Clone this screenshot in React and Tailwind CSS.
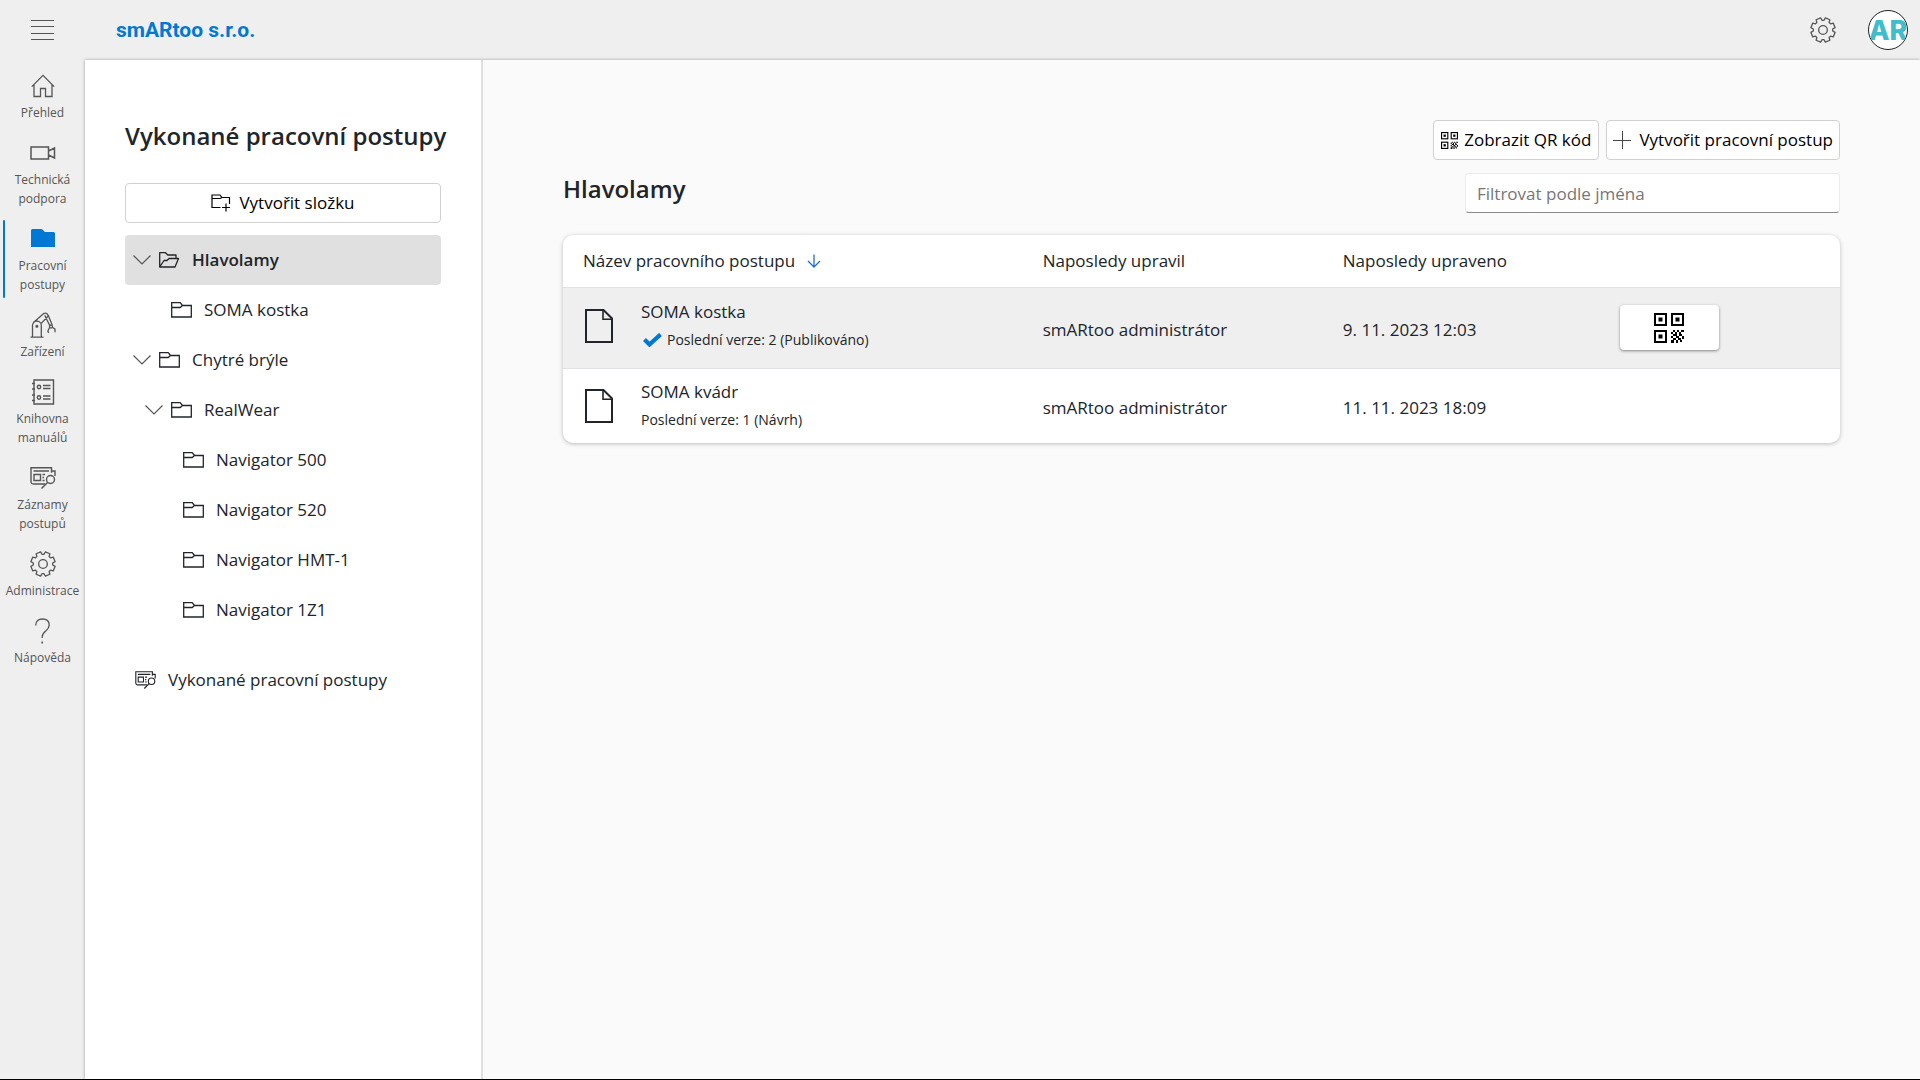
const gearPath = (() => {
  const points = [];
  for (let i = 0; i < 8; i += 1) {
    const notch = i * 45;
    [
      [notch - 11, 11.4],
      [notch - 6, 9],
      [notch + 6, 9],
      [notch + 11, 11.4],
    ].forEach(([deg, r]) => {
      const rad = (deg * Math.PI) / 180;
      points.push(`${(12 + r * Math.cos(rad)).toFixed(2)} ${(12 + r * Math.sin(rad)).toFixed(2)}`);
    });
  }
  return `M${points.join("L")}Z`;
})();

function MenuIcon() {
  return (
    <svg className="h-6 w-6" viewBox="0 0 24 24" fill="none" stroke="currentColor" aria-hidden="true">
      <path d="M0 2.5h23M0 8.5h23M0 15.5h23M0 21.5h23" />
    </svg>
  );
}

function HomeIcon() {
  return (
    <svg className="h-6 w-6" viewBox="0 0 24 24" fill="none" stroke="currentColor" strokeWidth="1.3" aria-hidden="true">
      <path d="M.8 12.6 12 1.4l11.2 11.2M3 10.6v11.9h6.5v-8h5v8H21V10.6" />
    </svg>
  );
}

function VideoIcon() {
  return (
    <svg className="h-6 w-[26px]" viewBox="0 0 26 24" fill="none" stroke="currentColor" strokeWidth="1.5" aria-hidden="true">
      <path d="M1 6h17.5v12H1ZM18.5 10l6-3v10l-6-3" />
    </svg>
  );
}

function FolderSolidIcon() {
  return (
    <svg className="h-6 w-6" viewBox="0 0 24 24" fill="currentColor" aria-hidden="true">
      <path d="M0 3.5q0-1.500 1.500-1.500h8.600q.8 0 1.400.6L13.900 5H22.500Q24 5 24 6.500V20H0Z" />
    </svg>
  );
}

function RobotIcon() {
  return (
    <svg className="h-[26px] w-[26px]" viewBox="0 0 26 26" fill="none" stroke="currentColor" strokeWidth="1.3" strokeLinejoin="round" aria-hidden="true">
      <path d="M.5 25.2h13M2.5 25V13.5a4.4 4.4 0 0 1 8.8 0V25M3.2 10.8 13.7 1.6q1.8-1.2 3.4.2l1.3 2L11 11.6M18.4 3.8l3.7 9M14.7 3.3l5 10.2" />
      <circle cx="6.9" cy="14.3" r=".9" fill="currentColor" />
      <circle cx="21" cy="14.5" r="1.5" />
      <path d="m19.7 15.3-1.9 4 1 1.6M22.3 15.3l2.7 1.8v3.2" />
    </svg>
  );
}

function ManualIcon() {
  return (
    <svg className="h-[26px] w-6" viewBox="0 0 24 26" fill="none" stroke="currentColor" strokeWidth="1.4" aria-hidden="true">
      <path d="M3 1h19.500v24H3ZM1 4.500h3M1 10h3M1 16h3M1 21.500h3" />
      <circle cx="8" cy="8" r="1.7" />
      <circle cx="8" cy="18.5" r="1.7" />
      <path d="M12 6.500h7.500M12 9.500h7.500M12 17h7.500M12 20h7.500" />
    </svg>
  );
}

function RecordsIcon({ className }) {
  return (
    <svg className={className} viewBox="0 0 26 24" fill="none" stroke="currentColor" strokeWidth="1.4" aria-hidden="true">
      <path d="M15 18H3.500Q1 18 1 15.500V1.800h20.500v5M21.500 5H25v5M3.500 5H19M4 8.500h6.500v6H4ZM12.500 8.500h2.500M12.500 11.500h1.500M12.500 14.500h2" />
      <circle cx="20.5" cy="13.5" r="4" />
      <path d="m17.500 16.500-6 6" />
    </svg>
  );
}

function GearIcon() {
  return (
    <svg className="h-[26px] w-[26px]" viewBox="0 0 24 24" fill="none" stroke="currentColor" strokeWidth="1.2" strokeLinejoin="round" aria-hidden="true">
      <path d={gearPath} />
      <circle cx="12" cy="12" r="4" />
    </svg>
  );
}

function HelpIcon() {
  return (
    <svg className="h-[26px] w-6" viewBox="0 0 24 26" fill="none" stroke="currentColor" strokeWidth="1.3" aria-hidden="true">
      <path d="M4.700 7.500q0-6.500 6.800-6.500 6.700 0 6.700 6 0 3-3.200 5.700-3.800 3-3.800 6V20" />
      <path d="M11.200 23.500v2" strokeWidth="1.6" />
    </svg>
  );
}

function FolderIcon() {
  return (
    <svg className="h-4 w-[21px] shrink-0" viewBox="0 0 21 16" fill="none" stroke="currentColor" strokeWidth="1.3" aria-hidden="true">
      <path d="M.700.700h8.500l2.300 2.800h8.800v11.500H.700ZM.700 5.500h8.500l2.300-2" />
    </svg>
  );
}

function FolderOpenIcon() {
  return (
    <svg className="h-4 w-[21px] shrink-0" viewBox="0 0 21 16" fill="none" stroke="currentColor" strokeWidth="1.3" strokeLinejoin="round" aria-hidden="true">
      <path d="M.700 15V.700h5.800l2.300 2.300h8.200v3.500M.700 15 5 8.500h3l2-2h9.500L16 15Z" />
    </svg>
  );
}

function FolderPlusIcon() {
  return (
    <svg className="h-[18px] w-5 shrink-0" viewBox="0 0 20 18" fill="none" stroke="currentColor" strokeWidth="1.2" aria-hidden="true">
      <path d="M9.500 13.500H1V1h8l2 2.500h7.500v6.500M1 4.500h8l2-1M15 9.500v8M11 13.500h8" />
    </svg>
  );
}

function ChevronIcon() {
  return (
    <svg className="h-[10px] w-[18px] shrink-0 text-[#555555]" viewBox="0 0 18 10" fill="none" stroke="currentColor" strokeWidth="1.2" aria-hidden="true">
      <path d="m.500.500 8.500 8.500L17.500.500" />
    </svg>
  );
}

function QrIcon({ className }) {
  const finders = [
    [0, 0],
    [17, 0],
    [0, 17],
  ];
  return (
    <svg className={className} viewBox="0 0 30 30" fill="currentColor" aria-hidden="true">
      {finders.map(([x, y]) => (
        <g key={`${x}-${y}`}>
          <rect x={x + 1} y={y + 1} width="11" height="11" fill="none" stroke="currentColor" strokeWidth="2" />
          <rect x={x + 4.5} y={y + 4.5} width="4" height="4" />
        </g>
      ))}
      <path d="M19 17h2v2h-2ZM23 17h2v2h-2ZM27 17h3v2h-3ZM17 19h2v2h-2ZM21 19h2v2h-2ZM25 19h2v2h-2ZM19 21h4v2h-4ZM25 21h3v2h-3ZM17 23h2v2h-2ZM22 23h3v2h-3ZM28 23h2v3h-2ZM19 25h3v2h-3ZM24 25h3v2h-3ZM17 27h3v3h-3ZM22 27h2v3h-2ZM26 27h2v2h-2Z" />
    </svg>
  );
}

function DocumentIcon() {
  return (
    <svg className="h-[34px] w-7" viewBox="0 0 28 34" fill="none" stroke="currentColor" strokeWidth="2" aria-hidden="true">
      <path d="M1 1h17.500L27 9.500V33H1Z" />
      <path d="M18 1v9.300h9" strokeWidth="1.6" />
    </svg>
  );
}

const navItems = [
  { label: "Přehled", icon: <HomeIcon /> },
  { label: "Technická podpora", icon: <VideoIcon /> },
  { label: "Pracovní postupy", icon: <FolderSolidIcon />, active: true },
  { label: "Zařízení", icon: <RobotIcon /> },
  { label: "Knihovna manuálů", icon: <ManualIcon /> },
  { label: "Záznamy postupů", icon: <RecordsIcon className="h-6 w-[26px]" /> },
  { label: "Administrace", icon: <GearIcon /> },
  { label: "Nápověda", icon: <HelpIcon /> },
];

const folders = [
  { name: "Hlavolamy", indent: "pl-2", open: true, selected: true },
  { name: "SOMA kostka", indent: "pl-[46px]" },
  { name: "Chytré brýle", indent: "pl-2", open: true },
  { name: "RealWear", indent: "pl-5", open: true },
  { name: "Navigator 500", indent: "pl-[58px]" },
  { name: "Navigator 520", indent: "pl-[58px]" },
  { name: "Navigator HMT-1", indent: "pl-[58px]" },
  { name: "Navigator 1Z1", indent: "pl-[58px]" },
];

const workflows = [
  {
    name: "SOMA kostka",
    version: "Poslední verze: 2 (Publikováno)",
    published: true,
    author: "smARtoo administrátor",
    date: "9. 11. 2023 12:03",
  },
  {
    name: "SOMA kvádr",
    version: "Poslední verze: 1 (Návrh)",
    author: "smARtoo administrátor",
    date: "11. 11. 2023 18:09",
  },
];

function TopBar() {
  return (
    <header className="flex h-[60px] items-center bg-[#efefef] pr-3">
      <button type="button" aria-label="Menu" className="flex w-[85px] justify-center text-[#555555]">
        <MenuIcon />
      </button>
      <a href="#home" className="ml-[31px] font-['Roboto',sans-serif] text-[21px] font-bold text-[#0078d4]">
        smARtoo s.r.o.
      </a>
      <div className="ml-auto flex items-center gap-8">
        <button type="button" aria-label="Nastavení" className="text-[#555555]">
          <GearIcon />
        </button>
        <button
          type="button"
          aria-label="Profil"
          className="flex size-10 items-center justify-center overflow-hidden rounded-full border border-[#222222] bg-white font-['Inter',sans-serif] text-[27px] leading-none font-extrabold text-[#41bccb]"
        >
          AR
        </button>
      </div>
    </header>
  );
}

function SideNav() {
  return (
    <nav className="flex w-[85px] shrink-0 flex-col gap-2 bg-[#efefef] pt-[7px]" aria-label="Hlavní navigace">
      {navItems.map((item) => (
        <a
          key={item.label}
          href="#nav"
          className="relative flex flex-col items-center gap-[5px] pt-[7px] pb-1 text-center text-xs leading-[19px] text-[#555555]"
        >
          {item.active && <span className="absolute inset-y-0 left-[3px] w-[2px] rounded-full bg-[#0078d4]" />}
          <span className={`flex h-6 items-center ${item.active ? "text-[#0078d4]" : ""}`}>{item.icon}</span>
          <span className="px-2">{item.label}</span>
        </a>
      ))}
    </nav>
  );
}

function FolderPanel() {
  return (
    <aside className="w-[398px] shrink-0 border-r-2 border-[#e0e0e0] bg-white px-10 pt-[60px]">
      <h1 className="text-2xl leading-8 font-semibold whitespace-nowrap">Vykonané pracovní postupy</h1>
      <button
        type="button"
        className="mt-[31px] flex h-10 w-full items-center justify-center gap-2 rounded border border-[#d1d1d1] bg-white text-black"
      >
        <FolderPlusIcon />
        Vytvořit složku
      </button>
      <ul className="mt-3">
        {folders.map((folder) => (
          <li key={folder.name}>
            <button
              type="button"
              className={`flex h-[50px] w-full items-center rounded ${folder.indent} ${
                folder.selected ? "bg-[#e0e0e0] font-semibold" : ""
              }`}
            >
              {folder.open && (
                <span className="mr-2">
                  <ChevronIcon />
                </span>
              )}
              {folder.selected ? <FolderOpenIcon /> : <FolderIcon />}
              <span className="ml-3">{folder.name}</span>
            </button>
          </li>
        ))}
      </ul>
      <a href="#done" className="mt-5 flex h-[50px] items-center gap-3 pl-[10px]">
        <RecordsIcon className="h-5 w-[21px]" />
        Vykonané pracovní postupy
      </a>
    </aside>
  );
}

function WorkflowTable() {
  return (
    <div className="mt-[22px] overflow-hidden rounded-[10px] bg-white shadow-[0_1px_4px_rgba(0,0,0,0.25)]">
      <table className="w-full table-fixed border-collapse text-left">
        <thead>
          <tr className="h-[52px] border-b border-[#dee2e6]">
            <th className="w-[36%] px-5 font-normal">
              <span className="flex items-center gap-3">
                Název pracovního postupu
                <svg className="h-[14px] w-[14px] text-[#1f6fd0]" viewBox="0 0 14 14" fill="none" stroke="currentColor" strokeWidth="1.3" aria-hidden="true">
                  <path d="M7 .500v12.500M1 7l6 6 6-6" />
                </svg>
              </span>
            </th>
            <th className="w-[23.5%] px-5 font-normal">Naposledy upravil</th>
            <th className="w-[21.7%] px-5 font-normal">Naposledy upraveno</th>
            <th className="px-5" aria-label="QR kód" />
          </tr>
        </thead>
        <tbody>
          {workflows.map((item) => (
            <tr
              key={item.name}
              className={item.published ? "h-[81px] border-b border-[#dee2e6] bg-[#efefef]" : "h-[75px]"}
            >
              <td className={item.published ? "px-5 pb-1" : "px-5"}>
                <div className="flex items-center gap-7 pl-[2px]">
                  <DocumentIcon />
                  <div>
                    <div className="leading-7">{item.name}</div>
                    <div className="flex items-center gap-1 text-sm leading-7">
                      {item.published && (
                        <svg className="h-[14px] w-[22px] text-[#0078d4]" viewBox="0 0 22 14" fill="none" stroke="currentColor" strokeWidth="4.2" aria-hidden="true">
                          <path d="m3.500 6.500 5 5L19.500 1.500" />
                        </svg>
                      )}
                      {item.version}
                    </div>
                  </div>
                </div>
              </td>
              <td className="px-5 pt-1">{item.author}</td>
              <td className="px-5 pt-1">{item.date}</td>
              <td className="px-5">
                {item.published && (
                  <button
                    type="button"
                    aria-label="Zobrazit QR kód postupu"
                    className="flex h-[45px] w-[99px] items-center justify-center rounded bg-white text-black shadow-[0_1px_3px_rgba(0,0,0,0.45)]"
                  >
                    <QrIcon className="size-[30px]" />
                  </button>
                )}
              </td>
            </tr>
          ))}
        </tbody>
      </table>
    </div>
  );
}

export default function App() {
  return (
    <div className="flex min-h-screen flex-col border-b border-black bg-[#fafafa] font-['Open_Sans',sans-serif] text-[17px] leading-6 text-[#212529]">
      <TopBar />
      <div className="flex flex-1 bg-[#efefef]">
        <SideNav />
        <div className="flex min-w-0 flex-1 bg-[#fafafa] shadow-[0_0_3px_rgba(0,0,0,0.35)]">
          <FolderPanel />
          <main className="min-w-0 flex-1 px-20 pt-[60px]">
            <div className="flex justify-end gap-[7px]">
              <button
                type="button"
                className="flex h-10 items-center gap-[6px] rounded border border-[#d1d1d1] bg-white px-[7px] text-black"
              >
                <QrIcon className="size-[17px]" />
                Zobrazit QR kód
              </button>
              <button
                type="button"
                className="flex h-10 items-center gap-2 rounded border border-[#d1d1d1] bg-white px-[6px] text-black"
              >
                <svg className="size-[18px]" viewBox="0 0 18 18" fill="none" stroke="#444444" aria-hidden="true">
                  <path d="M0 9.500h18M9.500 0v18" />
                </svg>
                Vytvořit pracovní postup
              </button>
            </div>
            <div className="mt-[13px] flex items-start justify-between">
              <h2 className="text-2xl leading-8 font-semibold">Hlavolamy</h2>
              <input
                type="text"
                aria-label="Filtrovat podle jména"
                placeholder="Filtrovat podle jména"
                className="h-10 w-[375px] rounded border border-[#ececec] border-b-[#8a8a8a] bg-white px-[11px] placeholder:text-[#767676]"
              />
            </div>
            <WorkflowTable />
          </main>
        </div>
      </div>
    </div>
  );
}
